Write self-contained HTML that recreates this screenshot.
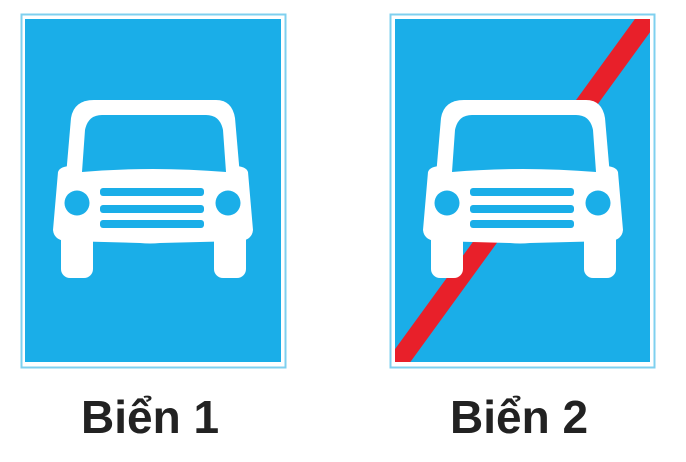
<!DOCTYPE html>
<html><head><meta charset="utf-8"><style>
html,body{margin:0;padding:0;background:#fff;width:686px;height:462px;overflow:hidden}
.t{position:absolute;font-family:"Liberation Sans",sans-serif;font-weight:bold;font-size:46px;color:#222;top:392px;line-height:50px}
</style></head><body>
<svg width="686" height="462" style="position:absolute;left:0;top:0">
<defs>
<g id="car" fill="#fff">
  <path d="M94,100 H216 Q232,100 235,118 L240,176 H66 L71,118 Q74,100 94,100 Z"/>
  <path d="M58,172 Q60,166 72,166 H234 Q246,166 248,172 L253,230 Q252,240 240,241 L160,243 Q150,244 140,243 L66,241 Q54,240 53,230 Z"/>
  <rect x="61" y="225" width="32" height="53" rx="9"/>
  <rect x="214" y="225" width="32" height="53" rx="9"/>
</g>
<g id="carD" fill="#1aaee8">
  <path d="M102,115 H206 Q220,115 223,130 L226,172 Q152,166 82,172 L85,130 Q88,115 102,115 Z"/>
  <circle cx="77" cy="203" r="12.5"/>
  <circle cx="228" cy="203" r="12.5"/>
  <rect x="100" y="188" width="104" height="8" rx="3"/>
  <rect x="100" y="205" width="104" height="8" rx="3"/>
  <rect x="100" y="220" width="104" height="8" rx="3"/>
</g>
<clipPath id="c2"><rect x="395" y="19" width="255" height="343"/></clipPath>
</defs>
<rect x="21.5" y="14.5" width="264" height="353" fill="#fff" stroke="#7fd0ef" stroke-width="2"/>
<rect x="25" y="19" width="256" height="343" fill="#1aaee8"/>
<use href="#car"/><use href="#carD"/>
<rect x="390.5" y="14.5" width="264" height="353" fill="#fff" stroke="#7fd0ef" stroke-width="2"/>
<rect x="395" y="19" width="255" height="343" fill="#1aaee8"/>
<line x1="648" y1="18" x2="398" y2="362" stroke="#e8202a" stroke-width="20" stroke-linecap="round" clip-path="url(#c2)"/>
<g transform="translate(370,0)"><use href="#car"/><use href="#carD"/></g>
</svg>
<div class="t" style="left:81px">Biển 1</div>
<div class="t" style="left:450px">Biển 2</div>
</body></html>
